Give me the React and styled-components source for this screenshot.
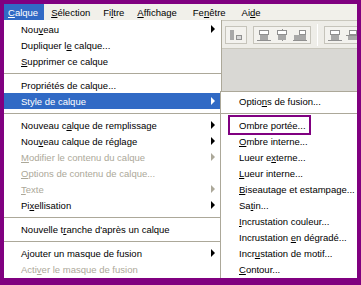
import React from "react";
import styled, { createGlobalStyle } from "styled-components";

const GlobalStyle = createGlobalStyle`
    html, body {
        margin: 0;
        padding: 0;
        background: #800080;
    }
    body {
        font-family: "Liberation Sans", Arial, sans-serif;
        font-size: 9.5px;
    }
`;

const menuBarItems = ["&Calque", "&Sélection", "Fi&ltre", "&Affichage", "Fe&nêtre", "Ai&de"];

const layerMenu = [
    { label: "Nou&veau", arrow: true },
    { label: "Dupliquer l&e calque..." },
    { label: "&Supprimer ce calque" },
    { sep: true },
    { label: "Propriétés de calque..." },
    { label: "Style de calque", arrow: true, active: true },
    { sep: true },
    { label: "Nouveau c&alque de remplissage", arrow: true },
    { label: "Nou&veau calque de réglage", arrow: true },
    { label: "&Modifier le contenu du calque", arrow: true, disabled: true },
    { label: "&Options de contenu de calque...", disabled: true },
    { label: "&Texte", arrow: true, disabled: true },
    { label: "Pi&xellisation", arrow: true },
    { sep: true },
    { label: "Nouvelle t&ranche d'après un calque" },
    { sep: true },
    { label: "Ajouter un masque de fusion", arrow: true },
    { label: "Acti&ver le masque de fusion", disabled: true },
];

const styleMenu = [
    { label: "Optio&ns de fusion..." },
    { sep: true },
    { label: "Ombre portée...", marked: true },
    { label: "&Ombre interne..." },
    { label: "Lueur e&xterne..." },
    { label: "&Lueur interne..." },
    { label: "&Biseautage et estampage..." },
    { label: "Sa&tin..." },
    { label: "&Incrustation couleur..." },
    { label: "Incrustation &en dégradé..." },
    { label: "Incr&ustation de motif..." },
    { label: "&Contour..." },
];

// "&" marks the access key, drawn underlined
function Label({ text }) {
    const i = text.indexOf("&");
    if (i < 0) return <Text>{text}</Text>;
    return (
        <Text>
            {text.slice(0, i)}
            <u>{text[i + 1]}</u>
            {text.slice(i + 2)}
        </Text>
    );
}

function AlignIcon({ variant }) {
    return (
        <svg width="14" height="12" viewBox="0 0 14 12">
            {variant === 0 && (
                <>
                    <rect x="1" y="1" width="4" height="10" fill="#a8a8a8" />
                    <rect x="7.5" y="6.5" width="5" height="4" fill="#d8d8d8" stroke="#909090" />
                </>
            )}
            {variant === 1 && (
                <>
                    <line x1="0" y1="11.5" x2="14" y2="11.5" stroke="#909090" />
                    <rect x="2.5" y="1.5" width="9" height="4" fill="#fff" stroke="#909090" />
                    <rect x="3" y="6" width="8" height="5" fill="#a8a8a8" />
                </>
            )}
            {variant === 2 && (
                <>
                    <line x1="7.5" y1="0" x2="7.5" y2="12" stroke="#909090" />
                    <rect x="2.5" y="1.5" width="9" height="4" fill="#fff" stroke="#909090" />
                    <rect x="3" y="6" width="8" height="5" fill="#a8a8a8" />
                </>
            )}
            {variant === 3 && (
                <>
                    <line x1="0" y1="11.5" x2="14" y2="11.5" stroke="#909090" />
                    <rect x="6.5" y="1.5" width="6" height="4" fill="#fff" stroke="#909090" />
                    <rect x="1" y="6" width="12" height="5" fill="#a8a8a8" />
                </>
            )}
            {variant === 4 && (
                <>
                    <line x1="0" y1="6.5" x2="14" y2="6.5" stroke="#909090" />
                    <rect x="3.5" y="1.5" width="7" height="4" fill="#fff" stroke="#909090" />
                    <rect x="2" y="7" width="10" height="4" fill="#a8a8a8" />
                </>
            )}
        </svg>
    );
}

function MenuList({ items, children }) {
    return items.map((item, idx) =>
        item.sep ? (
            <Separator key={idx} />
        ) : (
            <Item key={idx} $active={item.active} $disabled={item.disabled}>
                <Label text={item.label} />
                {item.marked && <Marker />}
                {item.arrow && <Arrow $active={item.active} $disabled={item.disabled} />}
                {item.active && children}
            </Item>
        )
    );
}

export default function App() {
    return (
        <>
            <GlobalStyle />
            <Frame>
                <MenuBar>
                    {menuBarItems.map((m, i) => (
                        <BarItem key={m} $open={i === 0}>
                            <Label text={m} />
                        </BarItem>
                    ))}
                </MenuBar>
                <Toolbar>
                    <ToolGroup>
                        <AlignIcon variant={0} />
                    </ToolGroup>
                    <ToolGroup>
                        <AlignIcon variant={1} />
                        <AlignIcon variant={2} />
                        <AlignIcon variant={3} />
                    </ToolGroup>
                    <ToolDivider />
                    <ToolGroup>
                        <AlignIcon variant={1} />
                        <AlignIcon variant={4} />
                        <AlignIcon variant={1} />
                    </ToolGroup>
                </Toolbar>
                <Workspace />
                <Dropdown>
                    <MenuList items={layerMenu}>
                        <Submenu>
                            <MenuList items={styleMenu} />
                        </Submenu>
                    </MenuList>
                </Dropdown>
            </Frame>
        </>
    );
}

const Frame = styled.div`
    position: relative;
    box-sizing: border-box;
    width: 361px;
    height: 285px;
    border-style: solid;
    border-color: #800080;
    border-width: 4px 4px 7px 4px;
    display: flex;
    flex-direction: column;
    background: #d9d8d4;
    overflow: hidden;
`;

const Text = styled.span`
    white-space: pre;
`;

const MenuBar = styled.div`
    display: flex;
    height: 16px;
    background: #f1f0ea;
    border-bottom: 1px solid #c9c7bd;
`;

const BarItem = styled.div`
    display: flex;
    align-items: center;
    padding: 0 6px 0 4px;
    margin-right: 3px;
    color: ${(p) => (p.$open ? "#fff" : "#000")};
    background: ${(p) => (p.$open ? "#316ac5" : "transparent")};

    &:nth-child(5),
    &:nth-child(6) {
        margin-left: 3px;
    }
`;

const Toolbar = styled.div`
    display: flex;
    align-items: center;
    gap: 6px;
    height: 27px;
    padding-left: 221px;
    background: #eeede8;
    border-bottom: 1px solid #c9c7bd;
`;

const ToolGroup = styled.div`
    display: flex;
    align-items: center;
    gap: 4px;
    height: 16px;
    padding: 0 3px;
    border: 1px solid #c6c4bb;
    background: #f3f2ee;
`;

const ToolDivider = styled.div`
    width: 1px;
    height: 22px;
    background: #b8b6ac;
    border-right: 1px solid #fff;
`;

const Workspace = styled.div`
    flex: 1;
    background: #d9d8d4;
`;

const Dropdown = styled.div`
    position: absolute;
    left: 0;
    top: 16px;
    width: 218px;
    box-sizing: border-box;
    padding: 1px 0 2px;
    background: #fff;
    border-right: 1px solid #aca899;
    border-bottom: 1px solid #aca899;
`;

const Submenu = styled.div`
    position: absolute;
    left: 216px;
    top: -2px;
    width: 137px;
    box-sizing: border-box;
    padding: 1px 0 2px;
    background: #fff;
    border: 1px solid #aca899;
    border-right: none;
    color: #000;
`;

const Item = styled.div`
    position: relative;
    display: flex;
    align-items: center;
    height: 16px;
    padding-left: 17px;
    white-space: nowrap;
    color: ${(p) => (p.$active ? "#fff" : p.$disabled ? "#aca899" : "#000")};
    background: ${(p) => (p.$active ? "#316ac5" : "transparent")};

    ${Submenu} & {
        padding-left: 18px;
    }
`;

const Arrow = styled.span`
    position: absolute;
    right: 6px;
    top: 4px;
    width: 0;
    height: 0;
    border-top: 4px solid transparent;
    border-bottom: 4px solid transparent;
    border-left: 4px solid ${(p) => (p.$active ? "#fff" : p.$disabled ? "#aca899" : "#000")};
`;

const Separator = styled.div`
    height: 1px;
    margin: 4px 0 3px;
    background: #aca899;
`;

const Marker = styled.span`
    position: absolute;
    left: 7px;
    top: -2px;
    width: 79px;
    height: 16px;
    border: 2px solid #800080;
`;
